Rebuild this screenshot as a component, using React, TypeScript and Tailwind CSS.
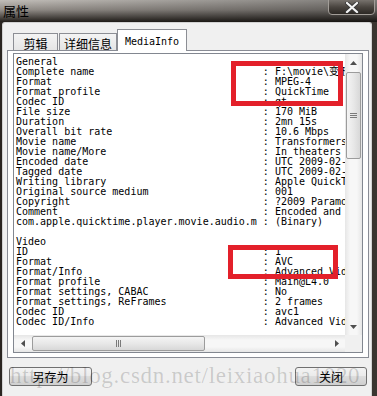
import React from "react";

const mono = "font-['DejaVu_Sans_Mono','Noto_Sans_CJK_SC',monospace]";
const cjk = "font-['Noto_Sans_CJK_SC','Noto_Sans',sans-serif]";

const general: [string, string][] = [
  ["Complete name", "F:\\movie\\变形金刚2.mov"],
  ["Format", "MPEG-4"],
  ["Format profile", "QuickTime"],
  ["Codec ID", "qt"],
  ["File size", "170 MiB"],
  ["Duration", "2mn 15s"],
  ["Overall bit rate", "10.6 Mbps"],
  ["Movie name", "Transformers: Revenge of the Fallen"],
  ["Movie name/More", "In theaters June 24"],
  ["Encoded date", "UTC 2009-02-12 08:12:40"],
  ["Tagged date", "UTC 2009-02-12 08:13:00"],
  ["Writing library", "Apple QuickTime"],
  ["Original source medium", "001"],
  ["Copyright", "?2009 Paramount Pictures"],
  ["Comment", "Encoded and uploaded"],
  ["com.apple.quicktime.player.movie.audio.m", "(Binary)"],
];

const video: [string, string][] = [
  ["ID", "1"],
  ["Format", "AVC"],
  ["Format/Info", "Advanced Video Codec"],
  ["Format profile", "Main@L4.0"],
  ["Format settings, CABAC", "No"],
  ["Format settings, ReFrames", "2 frames"],
  ["Codec ID", "avc1"],
  ["Codec ID/Info", "Advanced Video Coding"],
];

const row = ([k, v]: [string, string]) => k.padEnd(41, " ") + ": " + v;

const lines = ["General", ...general.map(row), "", "Video", ...video.map(row)];

function Arrow({ dir }: { dir: "up" | "down" | "left" | "right" }) {
  const pts = {
    up: "0,4 3.5,0 7,4",
    down: "0,0 7,0 3.5,4",
    left: "4,0 4,7 0,3.5",
    right: "0,0 0,7 4,3.5",
  }[dir];
  const vertical = dir === "up" || dir === "down";
  return (
    <svg width={vertical ? 7 : 4} height={vertical ? 4 : 7} viewBox={vertical ? "0 0 7 4" : "0 0 4 7"}>
      <polygon points={pts} fill="#505050" />
    </svg>
  );
}

function VScroll() {
  return (
    <div className="w-[17px] flex flex-col bg-[linear-gradient(to_right,#e6e6e6,#f7f7f7_30%,#f7f7f7_70%,#e6e6e6)]">
      <div className="h-[17px] flex items-center justify-center">
        <Arrow dir="up" />
      </div>
      <div className="flex-1 flex flex-col px-[1px] pt-[1px]">
        <div className="h-[87px] rounded-[2px] border border-[#9c9c9c] bg-[linear-gradient(to_right,#f4f4f4,#e8e8e8_50%,#d8d8d8)] flex flex-col items-center justify-center gap-[1px]">
          <div className="w-[7px] h-[1px] bg-[#7a7a7a]" />
          <div className="w-[7px] h-[1px] bg-[#7a7a7a]" />
          <div className="w-[7px] h-[1px] bg-[#7a7a7a]" />
        </div>
      </div>
      <div className="h-[17px] flex items-center justify-center">
        <Arrow dir="down" />
      </div>
    </div>
  );
}

function HScroll() {
  return (
    <div className="h-[17px] flex bg-[linear-gradient(to_bottom,#e6e6e6,#f7f7f7_30%,#f7f7f7_70%,#e6e6e6)]">
      <div className="w-[17px] flex items-center justify-center">
        <Arrow dir="left" />
      </div>
      <div className="flex-1 flex py-[1px] pl-[1px]">
        <div className="w-[173px] rounded-[2px] border border-[#9c9c9c] bg-[linear-gradient(to_bottom,#f4f4f4,#e8e8e8_50%,#d8d8d8)] flex items-center justify-center gap-[1px]">
          <div className="w-[1px] h-[7px] bg-[#7a7a7a]" />
          <div className="w-[1px] h-[7px] bg-[#7a7a7a]" />
          <div className="w-[1px] h-[7px] bg-[#7a7a7a]" />
        </div>
      </div>
      <div className="w-[17px] flex items-center justify-center">
        <Arrow dir="right" />
      </div>
    </div>
  );
}

function WinButton({ label, className }: { label: string; className: string }) {
  return (
    <div
      className={`h-[19px] rounded-[3px] border border-[#707070] bg-[linear-gradient(to_bottom,#f3f3f3,#ebebeb_45%,#dddddd_50%,#cfcfcf)] flex items-center justify-center text-[12px] leading-none text-black ${cjk} ${className}`}
    >
      {label}
    </div>
  );
}

export default function App() {
  return (
    <div className="relative w-[377px] h-[396px] overflow-hidden flex flex-col bg-[linear-gradient(to_right,#2a2521,#1c1814_50%,#3a3530)]">
      {/* title bar */}
      <div className="h-[22px] flex justify-between bg-[linear-gradient(to_right,transparent,rgba(0,0,0,0.35)),linear-gradient(to_bottom,#c2beb9,#928d88_45%,#221e1a)]">
        <span className={`pl-[3px] pt-[3px] text-[13px] leading-[15px] text-black ${cjk}`}>属性</span>
        <div className="mr-[2px] w-[47px] h-[16px] -mt-[1px] rounded-b-[4px] border border-[#a29d98] bg-[linear-gradient(to_bottom,#77726d,#4a4540_50%,#2c2824)] flex items-center justify-center">
          <svg width="14" height="11" viewBox="0 0 14 11">
            <path d="M2 1 L12 10 M12 1 L2 10" stroke="#3a3a3a" strokeWidth="4" strokeLinecap="round" />
            <path d="M2 1 L12 10 M12 1 L2 10" stroke="#f4f4f4" strokeWidth="2.2" strokeLinecap="round" />
          </svg>
        </div>
      </div>

      {/* client area */}
      <div className="flex-1 ml-[2px] mr-[5px] bg-[#f0f0f0] border-t border-l border-r border-[#d2d2d2] rounded-t-[3px] flex flex-col">
        <div className="ml-[4px] mt-[6px] flex flex-col">
          <div className="h-[22px] pl-[6px] flex items-end">
            <div className={`w-[45px] h-[18px] border border-b-0 border-[#8c8e94] bg-[linear-gradient(to_bottom,#f4f4f4,#e4e4e4)] flex items-center justify-center pt-[2px] text-[12px] leading-none text-black ${cjk}`}>
              剪辑
            </div>
            <div className={`ml-[1px] w-[58px] h-[18px] border border-b-0 border-[#8c8e94] bg-[linear-gradient(to_bottom,#f4f4f4,#e4e4e4)] flex items-center justify-center pt-[2px] text-[12px] leading-none text-black ${cjk}`}>
              详细信息
            </div>
            <div className={`relative z-10 w-[70px] h-[22px] border border-b-0 border-[#8c8e94] bg-white flex items-center justify-center pt-[2px] text-[10px] leading-none text-black ${mono}`}>
              MediaInfo
            </div>
          </div>

          <div className="relative -mt-[1px] w-[362px] h-[308px] border border-[#898c95] bg-white pl-[5px] pt-[2px]">
            <div className="w-[350px] h-[300px] border border-[#828790] bg-white flex flex-col">
              <div className="flex h-[281px]">
                <div className={`w-[331px] overflow-hidden pl-[2px] pt-[3px] whitespace-pre text-[10px] leading-[10px] text-black ${mono}`}>
                  {lines.map((l, i) => (
                    <div key={i} className="h-[10px]">
                      {l || " "}
                    </div>
                  ))}
                </div>
                <VScroll />
              </div>
              <div className="flex">
                <div className="w-[331px]">
                  <HScroll />
                </div>
                <div className="w-[17px] h-[17px] bg-[#f0f0f0]" />
              </div>
            </div>
          </div>
        </div>

        <div className="mt-[9px] flex justify-between">
          <WinButton label="另存为" className="ml-[6px] w-[83px]" />
          <WinButton label="关闭" className="mr-[4px] w-[72px]" />
        </div>
      </div>

      {/* annotations drawn over the screenshot */}
      <div className="absolute left-[231px] top-[61px] w-[112px] h-[45px] border-[5px] border-[#e3202a] pointer-events-none" />
      <div className="absolute left-[228px] top-[245px] w-[110px] h-[34px] border-[5px] border-[#e3202a] pointer-events-none" />
      <div className="absolute left-[10px] top-[364px] whitespace-nowrap text-[23px] leading-[23px] tracking-[0.7px] text-[rgba(0,0,0,0.17)] font-['Liberation_Serif',serif] pointer-events-none">
        http://blog.csdn.net/leixiaohua1020
      </div>
    </div>
  );
}
